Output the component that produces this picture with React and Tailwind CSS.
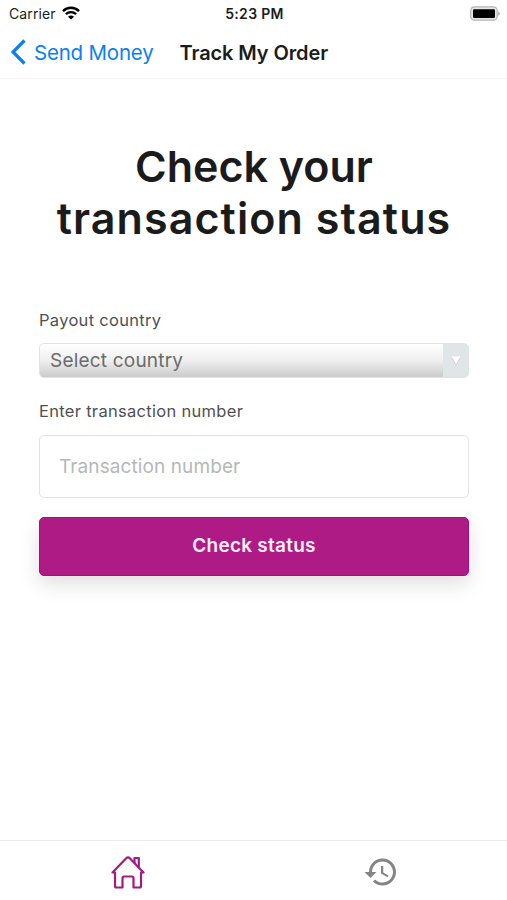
// src/App.jsx
import React, { useState } from "react";

const StatusBar = () => (
  <div className="h-[27px] shrink-0 grid grid-cols-3 items-center pl-[9px] pr-[7px] font-[Inter,sans-serif] text-[14px] text-[#1c1c1c]">
    <div className="flex items-center gap-[6px]">
      <span className="tracking-[0.1px]">Carrier</span>
      <svg className="-mt-px" width="18" height="14" viewBox="0 0 18 14" fill="none" aria-hidden="true">
        <path d="M1 5.2C5.5.7 12.5.7 17 5.2" stroke="#000" strokeWidth="2.5" />
        <path d="M3.9 8.2c2.9-2.8 7.3-2.8 10.2 0" stroke="#000" strokeWidth="2.3" />
        <path d="M9 13.6L6 10.7c1.7-1.6 4.3-1.6 6 0z" fill="#000" />
      </svg>
    </div>
    <span className="text-center font-semibold tracking-[0.3px]">5:23 PM</span>
    <svg className="justify-self-end" width="30" height="15" viewBox="0 0 30 15" aria-hidden="true">
      <rect x="0.7" y="0.8" width="26.5" height="13.4" rx="3.8" fill="#e6e6e6" stroke="#b5b5b5" strokeWidth="1.2" />
      <rect x="3" y="3.2" width="22" height="8.8" rx="1.2" fill="#000" />
      <path d="M28.2 5.2c2 .8 2 3.8 0 4.6z" fill="#a8a8a8" />
    </svg>
  </div>
);

const NavBar = () => (
  <header className="h-[52px] shrink-0 flex items-center pl-[11px] border-b border-[#f4f4f4] font-[Inter,sans-serif]">
    <button type="button" className="flex items-center gap-[8px] text-[#0c7ff2]">
      <svg className="-mt-px" width="15" height="26" viewBox="0 0 15 26" fill="none" aria-hidden="true">
        <path d="M13.5 1.5L2 13l11.5 11.5" stroke="currentColor" strokeWidth="3.2" />
      </svg>
      <span className="text-[20.5px] leading-6 tracking-[-0.2px] whitespace-nowrap">Send Money</span>
    </button>
    <h2 className="ml-[26px] text-[20px] leading-6 font-semibold tracking-[-0.1px] text-[#1c1c1c] whitespace-nowrap">
      Track My Order
    </h2>
  </header>
);

const TabBar = () => (
  <nav className="h-[60px] shrink-0 grid grid-cols-2 border-t border-[#ececec]">
    <button type="button" aria-label="Home" className="flex items-center justify-center pt-[3px] pl-[2px]">
      <svg width="34" height="34" viewBox="0 0 34 34" fill="none" stroke="#a31a80" strokeWidth="2.2" strokeLinejoin="round" strokeLinecap="round" aria-hidden="true">
        <path d="M4 17.5H1.5L15.2 3.200q1.800-1.600 3.600 0L32.500 17.500H30V31q0 1.500-1.500 1.500H22.500V23q0-1.500-1.500-1.500H13q-1.500 0-1.500 1.500V32.500H5.500Q4 32.500 4 31z" />
        <path d="M23.500 7.500V3H27.800V12.500" />
      </svg>
    </button>
    <button type="button" aria-label="History" className="flex items-center justify-center pt-[3px] pl-[2px]">
      <svg width="36" height="36" viewBox="0 0 24 24" fill="#858585" aria-hidden="true">
        <path d="M13 3c-4.970 0-9 4.030-9 9H1l3.890 3.890.07.14L9 12H6c0-3.870 3.130-7 7-7s7 3.130 7 7-3.130 7-7 7c-1.930 0-3.680-.79-4.940-2.060l-1.420 1.420C8.270 19.990 10.510 21 13 21c4.970 0 9-4.030 9-9s-4.030-9-9-9zm-1 5v5l4.280 2.540.72-1.210-3.500-2.080V8H12z" />
      </svg>
    </button>
  </nav>
);

const App = () => {
  const [number, setNumber] = useState("");

  return (
    <div className="h-screen flex flex-col bg-white overflow-hidden font-[Inter,sans-serif]">
      <StatusBar />
      <NavBar />

      <main className="flex-1 pl-[39px] pr-[38px] pt-[61px]">
        <h1 className="text-center text-[43px] leading-[52px] font-semibold text-[#1b1b1b] whitespace-nowrap">
          Check your
          <br />
          <span className="tracking-[1.1px]">transaction status</span>
        </h1>

        <form className="mt-[65px]" onSubmit={(e) => e.preventDefault()}>
          <p className="text-[16.5px] leading-[22px] tracking-[0.3px] text-[#505050]">
            Payout country
          </p>
          <button
            type="button"
            className="mt-[12px] h-[35px] w-full flex items-stretch rounded-[5px] border border-[#e1e4e5] overflow-hidden bg-linear-to-b from-white via-[#efefef] to-[#cbcbcb] text-left"
          >
            <span className="flex-1 pl-[10px] text-[19px] leading-[34px] tracking-[0.2px] text-[#6b6b6b]">
              Select country
            </span>
            <span className="w-[25px] flex items-center justify-center bg-[#e0e5e7]">
              <svg width="10" height="10" viewBox="0 0 10 10" aria-hidden="true">
                <path d="M0.5 1.5h9L5 9.500z" fill="#b9bdbf" />
                <path d="M0.5 0.5h9L5 8.500z" fill="#fff" />
              </svg>
            </span>
          </button>

          <label
            htmlFor="number"
            className="mt-[22px] block text-[16.5px] leading-[22px] tracking-[0.3px] text-[#505050]"
          >
            Enter transaction number
          </label>
          <input
            id="number"
            type="text"
            value={number}
            onChange={(e) => setNumber(e.target.value)}
            placeholder="Transaction number"
            className="mt-[13px] block h-[63px] w-full rounded-[5px] border-[1.5px] border-[#e2e4e4] px-[19px] text-[19px] tracking-[0.1px] placeholder:text-[#b5b8b8]"
          />

          <button
            type="submit"
            className="mt-[19px] h-[59px] w-full rounded-[5px] border border-[#a01277] bg-[#af1b85] text-[19px] font-semibold tracking-[0.25px] text-[#fbeef7] shadow-[0_8px_20px_rgba(0,0,0,0.13)]"
          >
            Check status
          </button>
        </form>
      </main>

      <TabBar />
    </div>
  );
};

export default App;
